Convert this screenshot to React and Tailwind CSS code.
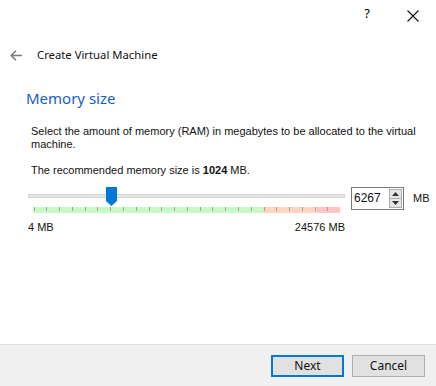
import React from "react";

const TICKS = Array.from({ length: 24 }, (_, i) => 0.5 + i * 12.78);

function ColorBar() {
  return (
    <svg width="307" height="6" viewBox="0 0 307 6" className="block">
      <rect x="0" y="0" width="230" height="6" fill="#c8fac8" />
      <rect x="230" y="0" width="54" height="6" fill="#ffd4c0" />
      <rect x="284" y="0" width="23" height="6" fill="#ffc4c4" />
      {TICKS.map((t, i) => (
        <rect key={i} x={Math.round(t)} y="0" width="1" height="4" fill="#a0a0a0" />
      ))}
    </svg>
  );
}

function Thumb() {
  return (
    <svg width="11" height="19" viewBox="0 0 11 19" className="block">
      <path d="M0 0 H11 V14 L5.5 19 L0 14 Z" fill="#0078d7" />
    </svg>
  );
}

export default function App() {
  return (
    <div
      className="w-[436px] h-[386px] bg-white flex flex-col text-black overflow-hidden"
      style={{ fontFamily: '"Liberation Sans", Arial, sans-serif' }}
    >
      {/* title bar */}
      <div className="h-[30px] flex justify-end items-center">
        <span className="text-[13px] leading-none mr-[37px] mt-[-4px]" style={{ fontFamily: '"Noto Sans", sans-serif' }}>?</span>
        <svg width="12" height="12" viewBox="0 0 12 12" className="mr-[17px] mt-[2px]">
          <path d="M0.5 0.5 L11.5 11.5 M11.5 0.5 L0.5 11.5" stroke="#111" strokeWidth="1.1" />
        </svg>
      </div>

      {/* header row */}
      <div className="h-[20px] mt-[15px] flex items-center">
        <svg width="12" height="11" viewBox="0 0 12 11" className="ml-[10px]">
          <path d="M6 0.7 L1.2 5.5 L6 10.3 M1.2 5.5 H12" stroke="#7a7a7a" strokeWidth="1.5" fill="none" />
        </svg>
        <span
          className="ml-[15px] text-[11.3px] leading-[20px] text-[#111]"
          style={{ fontFamily: '"Noto Sans", sans-serif' }}
        >
          Create Virtual Machine
        </span>
      </div>

      {/* page title */}
      <div
        className="h-[20px] mt-[23px] pl-[26px] text-[15px] leading-[20px] text-[#1560c8]"
        style={{ fontFamily: '"Noto Sans", sans-serif' }}
      >
        Memory size
      </div>

      {/* description */}
      <div className="mt-[17px] pl-[31px] pr-[20px] text-[11px] leading-[13px] text-[#111]">
        Select the amount of memory (RAM) in megabytes to be allocated to the virtual machine.
      </div>
      <div className="mt-[13px] pl-[31px] text-[11px] leading-[13px] text-[#111]">
        The recommended memory size is <b>1024</b> MB.
      </div>

      {/* slider row */}
      <div className="mt-[10px] flex items-start pl-[28px]">
        <div className="w-[317px] flex flex-col">
          <div className="relative h-[20px]">
            <div className="absolute left-0 right-0 top-[7px] h-[4px] bg-[#e6e6e6] border border-[#d6d6d6]" />
            <div className="absolute left-[78px] top-0">
              <Thumb />
            </div>
          </div>
          <div className="ml-[5px]">
            <ColorBar />
          </div>
          <div className="mt-[7px] flex justify-between text-[11px] leading-[14px] text-[#111]">
            <span>4 MB</span>
            <span>24576 MB</span>
          </div>
        </div>

        <div className="ml-[6px] w-[53px] h-[23px] border border-[#7a7a7a] bg-white flex items-stretch">
          <div className="flex-1 pl-[2px] text-[12px] leading-[21px] text-[#111]">6267</div>
          <div className="w-[13px] flex flex-col my-[1px] mr-[1px]">
            <div className="flex-1 bg-[#e5e5e5] border border-[#adadad] flex items-center justify-center">
              <svg width="7" height="4" viewBox="0 0 7 4"><path d="M3.5 0 L7 4 H0 Z" fill="#333" /></svg>
            </div>
            <div className="flex-1 bg-[#e5e5e5] border border-[#adadad] border-t-0 flex items-center justify-center">
              <svg width="7" height="4" viewBox="0 0 7 4"><path d="M0 0 H7 L3.5 4 Z" fill="#333" /></svg>
            </div>
          </div>
        </div>
        <div className="ml-[9px] h-[23px] leading-[23px] text-[11px] text-[#111]">MB</div>
      </div>

      {/* footer */}
      <div className="mt-auto h-[42px] bg-[#f0f0f0] border-t border-[#dfdfdf] flex items-center justify-end gap-[8px] pr-[11px]">
        <button className="w-[73px] h-[22px] bg-[#e1e1e1] border-2 border-[#0078d7] text-[12px] leading-none text-[#111]" style={{ fontFamily: '"Noto Sans", sans-serif' }}>
          Next
        </button>
        <button className="w-[73px] h-[22px] bg-[#e1e1e1] border border-[#adadad] text-[12px] leading-none text-[#111]" style={{ fontFamily: '"Noto Sans", sans-serif' }}>
          Cancel
        </button>
      </div>
    </div>
  );
}
